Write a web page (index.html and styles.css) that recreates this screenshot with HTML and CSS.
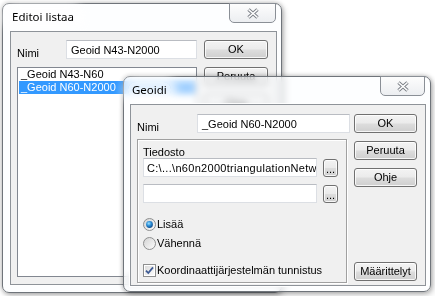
FILE: index.html
```html
<!DOCTYPE html>
<html lang="fi">
<head>
    <meta charset="UTF-8">
    <title>Geoidi</title>
    <link rel="stylesheet" href="styles.css">
</head>
<body>
    <div class="desk">
        <section class="win win-list">
            <header class="titlebar">
                <span class="title">Editoi listaa</span>
                <span class="close close-wide">
                    <svg width="14" height="11" viewBox="0 0 14 11"><path d="M2.5 1.5 L11.5 9.5 M11.5 1.5 L2.5 9.5" stroke="#7a7f86" stroke-width="3.4" fill="none"/><path d="M2.5 1.5 L11.5 9.5 M11.5 1.5 L2.5 9.5" stroke="#fff" stroke-width="1.6" fill="none"/></svg>
                </span>
            </header>
            <div class="client list-client">
                <div class="list-main">
                    <div class="field-row">
                        <label class="field-label">Nimi</label>
                        <div class="textbox name-box">Geoid N43-N2000</div>
                    </div>
                    <ul class="listbox">
                        <li>_Geoid N43-N60</li>
                        <li class="sel">_Geoid N60-N2000</li>
                    </ul>
                </div>
                <div class="btn-col">
                    <button class="btn">OK</button>
                    <button class="btn">Peruuta</button>
                    <button class="btn">Ohje</button>
                </div>
            </div>
        </section>

        <section class="win win-geoid">
            <header class="titlebar">
                <span class="title">Geoidi</span>
                <span class="close">
                    <svg width="14" height="11" viewBox="0 0 14 11"><path d="M2.5 1.5 L11.5 9.5 M11.5 1.5 L2.5 9.5" stroke="#7a7f86" stroke-width="3.4" fill="none"/><path d="M2.5 1.5 L11.5 9.5 M11.5 1.5 L2.5 9.5" stroke="#fff" stroke-width="1.6" fill="none"/></svg>
                </span>
            </header>
            <div class="client geoid-client">
                <div class="geoid-main">
                    <div class="field-row">
                        <label class="field-label">Nimi</label>
                        <div class="textbox geoid-name">_Geoid N60-N2000</div>
                    </div>
                    <div class="group">
                        <div class="group-label">Tiedosto</div>
                        <div class="path-row">
                            <div class="textbox path-box">C:\...\n60n2000triangulationNetw</div>
                            <button class="btn btn-dots">...</button>
                        </div>
                        <div class="path-row path-row-2">
                            <div class="textbox path-box"></div>
                            <button class="btn btn-dots">...</button>
                        </div>
                        <div class="opt-row opt-first">
                            <svg width="13" height="13" viewBox="0 0 13 13">
                                <defs>
                                    <linearGradient id="rg1" x1="0" y1="0" x2="1" y2="1"><stop offset="0" stop-color="#d2d2d2"/><stop offset="1" stop-color="#fdfdfd"/></linearGradient>
                                    <radialGradient id="dot" cx=".4" cy=".35" r=".75"><stop offset="0" stop-color="#9fe2ff"/><stop offset=".45" stop-color="#2b8fd8"/><stop offset="1" stop-color="#0c3c78"/></radialGradient>
                                </defs>
                                <circle cx="6.5" cy="6.5" r="6" fill="url(#rg1)" stroke="#8e8f8f"/>
                                <circle cx="6.5" cy="6.5" r="3.4" fill="url(#dot)"/>
                            </svg>
                            <span>Lisää</span>
                        </div>
                        <div class="opt-row">
                            <svg width="13" height="13" viewBox="0 0 13 13">
                                <defs>
                                    <linearGradient id="rg2" x1="0" y1="0" x2="1" y2="1"><stop offset="0" stop-color="#d2d2d2"/><stop offset="1" stop-color="#fdfdfd"/></linearGradient>
                                </defs>
                                <circle cx="6.5" cy="6.5" r="6" fill="url(#rg2)" stroke="#8e8f8f"/>
                            </svg>
                            <span>Vähennä</span>
                        </div>
                        <div class="opt-row opt-check">
                            <svg width="13" height="13" viewBox="0 0 13 13">
                                <defs>
                                    <linearGradient id="cg" x1="0" y1="0" x2="1" y2="1"><stop offset="0" stop-color="#dcdcdc"/><stop offset="1" stop-color="#fbfbfb"/></linearGradient>
                                </defs>
                                <rect x="0.5" y="0.5" width="12" height="12" fill="#fff" stroke="#8e8f8f"/>
                                <rect x="2" y="2" width="9" height="9" fill="url(#cg)"/>
                                <path d="M3 6.6 L5.3 9 L10 3.4" stroke="#3d5a93" stroke-width="1.8" fill="none"/>
                            </svg>
                            <span>Koordinaattijärjestelmän tunnistus</span>
                        </div>
                    </div>
                </div>
                <div class="btn-col geoid-btns">
                    <button class="btn">OK</button>
                    <button class="btn">Peruuta</button>
                    <button class="btn">Ohje</button>
                    <button class="btn btn-bottom">Määrittelyt</button>
                </div>
            </div>
        </section>
    </div>
</body>
</html>
```

FILE: styles.css
```css
body {
    margin: 0;
    background: #fff;
    font-family: "Liberation Sans", Arial, sans-serif;
    font-size: 11px;
    color: #000;
}
.desk {
    position: relative;
    width: 435px;
    height: 296px;
    overflow: hidden;
}

/* windows */
.win {
    position: absolute;
    box-sizing: border-box;
    display: flex;
    flex-direction: column;
    border: 1px solid #6f747a;
    border-radius: 7px;
    background: rgba(252, 253, 255, 0.55);
    backdrop-filter: blur(3px);
    box-shadow: 0 0 5px rgba(0, 0, 0, 0.3), 2px 3px 6px rgba(0, 0, 0, 0.2);
    padding: 0 4px 7px 7px;
}
.win-list {
    left: 2px;
    top: 3px;
    width: 280px;
    height: 290px;
}
.win-geoid {
    left: 123px;
    top: 76px;
    width: 308px;
    height: 216px;
    padding: 0 4px 5px 6px;
}
.titlebar {
    flex: none;
    height: 27px;
    display: flex;
    align-items: flex-start;
}
.title {
    font-family: "Noto Sans", sans-serif;
    font-size: 11.5px;
    line-height: 16px;
    margin: 5px 0 0 -2px;
    padding: 0 4px;
    border-radius: 8px;
    background: rgba(255, 255, 255, 0.7);
    box-shadow: 0 0 8px 6px rgba(255, 255, 255, 0.7);
}
.close {
    margin: -1px 1px 0 auto;
    width: 45px;
    height: 20px;
    box-sizing: border-box;
    border: 1px solid #8a8f96;
    border-radius: 0 0 5px 5px;
    background: linear-gradient(#fdfdfd, #eceef1);
    display: flex;
    align-items: center;
    justify-content: center;
}
.close-wide {
    width: 47px;
}

/* client areas */
.client {
    flex: 1;
    display: flex;
    box-sizing: border-box;
    border: 1px solid #8e9399;
    background: #f0f0f0;
    box-shadow: 0 0 0 1px rgba(255, 255, 255, 0.9);
}
.list-client {
    padding: 8px 8px 7px 6px;
    gap: 7px;
}
.geoid-client {
    padding: 9px 8px 1px 6px;
    gap: 4px;
}
.list-main {
    width: 180px;
    display: flex;
    flex-direction: column;
}
.geoid-main {
    width: 213px;
    display: flex;
    flex-direction: column;
}
.field-row {
    display: flex;
    height: 19px;
}
.field-label {
    padding-top: 7px;
    line-height: 13px;
}

/* inputs */
.textbox {
    box-sizing: border-box;
    height: 19px;
    margin-left: auto;
    padding: 3px 4px 0;
    line-height: 13px;
    white-space: nowrap;
    overflow: hidden;
    background: #fff;
    border: 1px solid #dcdfe4;
    border-top-color: #b9bcc2;
}
.name-box {
    width: 131px;
}
.geoid-name {
    width: 153px;
}
.path-box {
    width: 174px;
    margin-left: 0;
    padding: 3px 1px 0 3px;
    letter-spacing: 0.3px;
}
.listbox {
    margin: 8px 0 0;
    padding: 0 1px;
    list-style: none;
    height: 210px;
    box-sizing: border-box;
    border: 1px solid #828790;
    background: #fff;
}
.listbox li {
    height: 13px;
    line-height: 13px;
    padding-left: 2px;
    white-space: nowrap;
}
.listbox .sel {
    background: #3399ff;
    color: #fff;
}

/* buttons */
.btn-col {
    width: 64px;
    display: flex;
    flex-direction: column;
    gap: 8px;
}
.geoid-btns {
    width: 63px;
}
.btn {
    height: 19px;
    box-sizing: border-box;
    padding: 0;
    border: 1px solid #707070;
    border-radius: 3px;
    background: linear-gradient(#f3f3f3 0%, #ebebeb 48%, #dddddd 52%, #cfcfcf 100%);
    box-shadow: inset 0 0 0 1px rgba(255, 255, 255, 0.8);
    font-family: inherit;
    font-size: 11px;
    line-height: 17px;
    color: #000;
    text-align: center;
}
.btn-bottom {
    margin-top: auto;
    margin-bottom: 3px;
}
.btn-dots {
    width: 15px;
    height: 18px;
    margin: 1px 0 0 -1px;
    line-height: 19px;
    overflow: hidden;
}

/* group */
.group {
    margin-top: 6px;
    width: 210px;
    height: 144px;
    box-sizing: border-box;
    border: 1px solid #a0a0a0;
    box-shadow: inset 1px 1px 0 #fff, 1px 1px 0 #fff;
    padding: 6px 5px 0;
    display: flex;
    flex-direction: column;
}
.group-label {
    line-height: 12px;
}
.path-row {
    display: flex;
    gap: 7px;
    height: 19px;
}
.path-row-2 {
    margin-top: 7px;
}
.opt-row {
    display: flex;
    align-items: center;
    gap: 1px;
    height: 16px;
    margin-top: 3px;
    line-height: 13px;
    white-space: nowrap;
}
.opt-first {
    margin-top: 13px;
}
.opt-check {
    margin-top: 11px;
}
```
